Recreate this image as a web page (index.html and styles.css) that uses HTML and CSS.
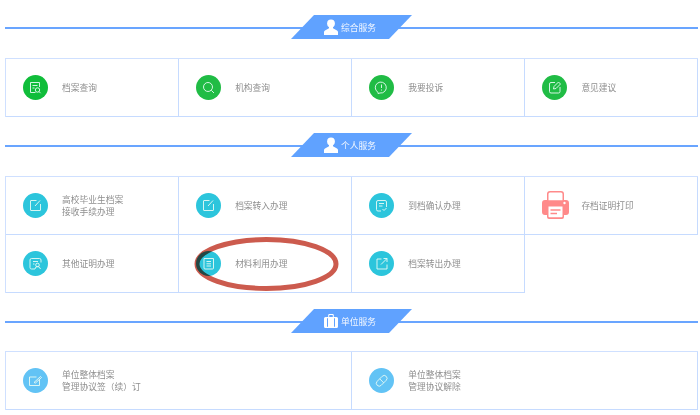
FILE: index.html

```html
<!DOCTYPE html>
<html>
  <head>
    <title>服务</title>
    <link rel="stylesheet" href="styles.css">
  </head>
  <body>
    <div class="sec-head">
      <div class="badge">
        <svg class="badge-ico" viewBox="0 0 14 16"><circle cx="7" cy="4.4" r="3.9"/><path d="M5 8h4v1.2l4 2.2q1 .6 1 1.6v3H0v-3q0-1 1-1.6l4-2.2z"/></svg>
        <span>综合服务</span>
      </div>
    </div>
    <div class="grid four">
      <div class="cell">
        <span class="ico green-dark"><svg viewBox="0 0 25 25"><path d="M16.500 12V7.500h-9v10h5M9.500 10.500h5M9.500 13h2"/><circle cx="14.500" cy="15" r="2.200"/><path d="M16 16.600l1.600 1.600"/></svg></span>
        <div class="txt">档案查询</div>
      </div>
      <div class="cell">
        <span class="ico green"><svg viewBox="0 0 25 25"><circle cx="12" cy="12" r="4.500"/><path d="M15.300 15.300l2.700 2.700"/></svg></span>
        <div class="txt">机构查询</div>
      </div>
      <div class="cell">
        <span class="ico green"><svg viewBox="0 0 25 25"><path d="M9 17.300a5.500 5.500 0 1 1 2 .7L9 18.500z"/><path d="M12.500 9.500v3.500M12.500 14.500v1"/></svg></span>
        <div class="txt">我要投诉</div>
      </div>
      <div class="cell">
        <span class="ico green"><svg viewBox="0 0 25 25"><path d="M13 7.500H9q-1.500 0-1.500 1.500v7.500q0 1.500 1.500 1.500h7.500q1.500 0 1.500-1.500V12M11.500 14l.5-2.500 4.500-4.500 2 2-4.500 4.500z"/></svg></span>
        <div class="txt">意见建议</div>
      </div>
    </div>

    <div class="sec-head">
      <div class="badge">
        <svg class="badge-ico" viewBox="0 0 14 16"><circle cx="7" cy="4.4" r="3.9"/><path d="M5 8h4v1.2l4 2.2q1 .6 1 1.6v3H0v-3q0-1 1-1.6l4-2.2z"/></svg>
        <span>个人服务</span>
      </div>
    </div>
    <div class="grid four">
      <div class="cell">
        <span class="ico cyan"><svg viewBox="0 0 25 25"><path d="M13.500 7.500H8q-.500 0-.500.500v9q0 .500.500.500h9q.500 0 .500-.500v-6M12 13l5-5.500"/></svg></span>
        <div class="txt">高校毕业生档案<br>接收手续办理</div>
      </div>
      <div class="cell">
        <span class="ico cyan"><svg viewBox="0 0 25 25"><path d="M13.500 7.500H8q-.500 0-.500.500v9q0 .500.500.500h9q.500 0 .500-.500v-6M12 13l5-5.500"/></svg></span>
        <div class="txt">档案转入办理</div>
      </div>
      <div class="cell">
        <span class="ico cyan"><svg viewBox="0 0 25 25"><path d="M12 18H9q-1.500 0-1.500-1.500V9Q7.500 7.500 9 7.500h7q1.500 0 1.500 1.500v5M10 10.500h5M10 13h3.500M13.500 16l1.500 1.500 2.500-2.500"/></svg></span>
        <div class="txt">到档确认办理</div>
      </div>
      <div class="cell">
        <span class="ico-print"><svg viewBox="0 0 27 28"><path class="print-body" d="M5 9V3q0-3 3-3h11q3 0 3 3v6h2q3 0 3 3v9q0 3-3 3h-2v2q0 2-2 2H7q-2 0-2-2v-2H3q-3 0-3-3v-9q0-3 3-3z"/><path class="print-cut" d="M6.500 9.300V3q0-1.500 1.500-1.500h11q1.500 0 1.500 1.500v6.300zM6.500 15.500h14v10q0 .800-.800.800H7.300q-.800 0-.800-.800z"/><circle class="print-cut" cx="22.500" cy="12" r="1.200"/><path class="print-line" d="M8.500 19h10M8.500 22.500h6.500"/></svg></span>
        <div class="txt">存档证明打印</div>
      </div>
      <div class="cell">
        <span class="ico cyan"><svg viewBox="0 0 25 25"><path d="M12 18H8.500Q7 18 7 16.500V9q0-1.500 1.500-1.500h8Q18 7.500 18 9v2.500M10 10.500h5M10 13h1.500"/><circle cx="14.500" cy="14" r="1.800"/><path d="M12 18q.300-2.500 2.500-2.500t3 2.500"/></svg></span>
        <div class="txt">其他证明办理</div>
      </div>
      <div class="cell has-oval">
        <span class="ico cyan"><svg viewBox="0 0 25 25"><path d="M8 7.500h9.500V17q0 1-1 1H9q-1 0-1-1zM10.500 10.500h4.500M10.500 12.800h4.500M10.500 15h4.500"/></svg></span>
        <div class="txt">材料利用办理</div>
        <svg class="oval" viewBox="0 0 145 56"><ellipse cx="72.500" cy="28" rx="69.500" ry="24.500"/></svg>
      </div>
      <div class="cell">
        <span class="ico cyan"><svg viewBox="0 0 25 25"><path d="M12.500 8H8v10h10v-4.500M12 13.500L18 7.500M14.500 7.500H18V11"/></svg></span>
        <div class="txt">档案转出办理</div>
      </div>
    </div>

    <div class="sec-head tight">
      <div class="badge">
        <svg class="badge-ico bag" viewBox="0 0 14 14"><path d="M1.500 3h11q1.500 0 1.500 1.500v8q0 1.500-1.500 1.500h-11Q0 14 0 12.500v-8Q0 3 1.500 3zM3 4.200v8.600h1V4.200zm7 0v8.600h1V4.200zM4.200 3V1.200Q4.200 0 5.400 0h3.200q1.200 0 1.200 1.200V3H8.800V1.400q0-.4-.4-.4H5.600q-.4 0-.4.400V3z"/></svg>
        <span>单位服务</span>
      </div>
    </div>
    <div class="grid two">
      <div class="cell">
        <span class="ico blue"><svg viewBox="0 0 25 25"><path d="M16.500 11.500V17.500h-10v-8.500h7M11 14.500l6.500-6 1 1-6 5.500z"/></svg></span>
        <div class="txt">单位整体档案<br>管理协议签（续）订</div>
      </div>
      <div class="cell">
        <span class="ico blue"><svg viewBox="0 0 25 25"><path d="M8.200 13.300l5-5a2.800 2.800 0 0 1 4 4l-5 5a2.800 2.800 0 0 1-4-4zM10.700 10.800l4 4"/></svg></span>
        <div class="txt">单位整体档案<br>管理协议解除</div>
      </div>
    </div>
  </body>
</html>
```

FILE: styles.css

```css
html, body { margin: 0; padding: 0; background: #fff; }

body {
  width: 700px;
  height: 415px;
  overflow: hidden;
  box-sizing: border-box;
  padding: 15px 2px 0 4px;
  font-family: "Noto Sans CJK SC", "Liberation Sans", sans-serif;
  font-size: 8.75px;
  color: #8f8f8f;
  filter: blur(0.5px);
}

.sec-head {
  margin: 0 0 19px 1px;
  height: 24px;
  display: flex;
  justify-content: center;
  background: linear-gradient(#69a5ff, #69a5ff) 0 12px / 100% 2px no-repeat;
}
.sec-head.tight { margin-bottom: 18px; }

.badge {
  width: 121px;
  height: 24px;
  display: flex;
  align-items: center;
  justify-content: center;
  gap: 3px;
  padding-right: 3px;
  box-sizing: border-box;
  background: #60a2ff;
  color: #f2f7ff;
  clip-path: polygon(23px 0, 100% 0, 98px 100%, 0 100%);
}

.badge-ico { width: 14px; height: 16px; fill: #fff; }
.badge-ico.bag { height: 14px; }

.grid {
  display: grid;
  margin: 0 0 16px 0.5px;
  border-top: 1px solid #cfe0ff;
  border-left: 1px solid #cfe0ff;
}
.four { grid-template-columns: repeat(4, 1fr); }
.two { grid-template-columns: repeat(2, 1fr); }

.cell {
  height: 57px;
  position: relative;
  display: flex;
  align-items: center;
  padding-left: 17px;
  border-right: 1px solid #c6dbff;
  border-bottom: 1px solid #c6dbff;
}

.txt { line-height: 12px; }

.ico {
  flex: none;
  width: 25px;
  height: 25px;
  margin-right: 14.5px;
  border-radius: 50%;
}
.ico svg {
  display: block;
  fill: none;
  stroke: #e8fbf4;
  stroke-width: 0.9;
}
.green-dark { background: #10bd3a; }
.green { background: #20bc45; }
.cyan { background: #2cc5dc; }
.blue { background: #62c3f5; }

.ico-print { flex: none; width: 27px; height: 28px; margin: -2px 12.5px 0 0; }
.ico-print svg { display: block; }
.print-body { fill: #ff8a8a; }
.print-cut { fill: #fff; }
.print-line { fill: none; stroke: #ff8a8a; stroke-width: 1.5; }

/* hand drawn mark over the cell */
.oval {
  position: absolute;
  left: 15px;
  top: 1px;
  width: 145px;
  height: 56px;
  mix-blend-mode: multiply;
}
.oval ellipse { fill: none; stroke: #cc5b4e; stroke-width: 5; }
```
